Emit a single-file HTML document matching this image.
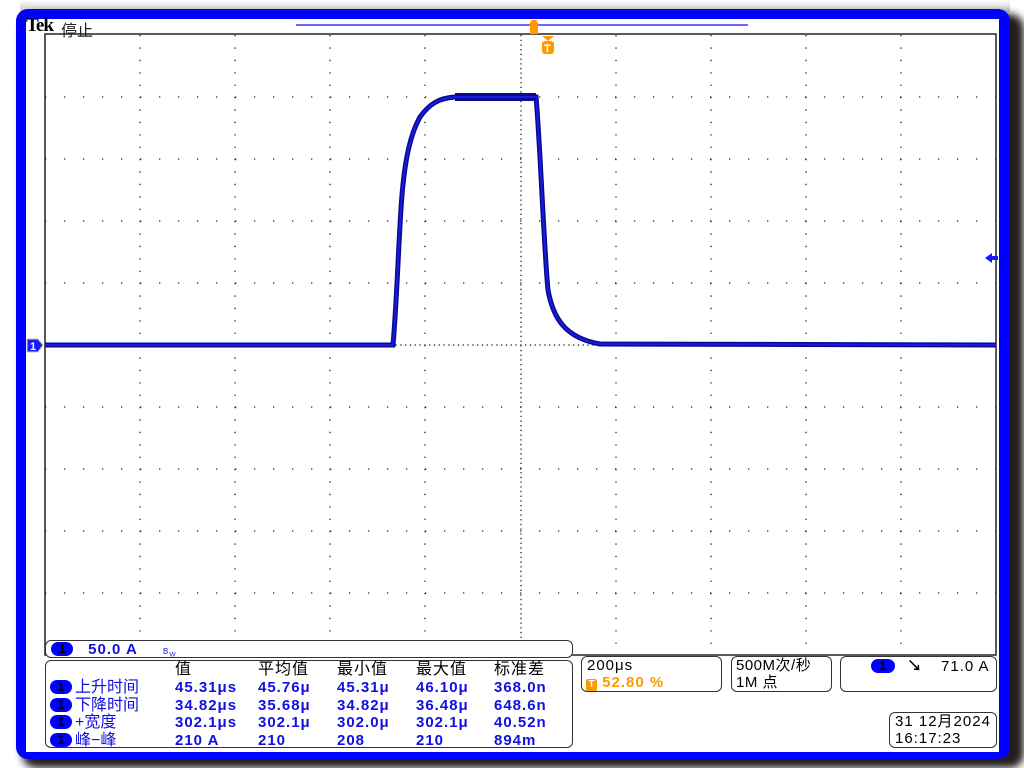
<!DOCTYPE html>
<html><head><meta charset="utf-8">
<style>
*{margin:0;padding:0;box-sizing:border-box}
body{width:1024px;height:768px;background:#fff;position:relative;overflow:hidden;font-family:"Liberation Sans","Noto Sans CJK SC",sans-serif}
.shadow{position:absolute;left:22px;top:14px;width:1002px;height:754px;background:#231d1f;border-radius:14px;filter:blur(4px)}
.topshade{position:absolute;left:20px;top:0;width:990px;height:12px;background:linear-gradient(#fff,#c8c8c8)}
.frame{position:absolute;left:16px;top:9px;width:994px;height:750px;background:#0000ff;border-radius:12px}
.inner{position:absolute;left:26px;top:19px;width:973px;height:733px;background:#fff}
.t{position:absolute;white-space:nowrap}
.box{position:absolute;border:1px solid #333;border-radius:6px;background:#fff}
.pill{display:inline-block;background:#0000ff;color:#000;border-radius:8px;width:22px;height:14px;text-align:center;font-size:13px;line-height:14px;font-weight:bold;letter-spacing:0;vertical-align:1px}
.blue{color:#1010e0;font-weight:bold}
.m{position:absolute;font-size:15px;line-height:17px;white-space:nowrap;letter-spacing:1px}
</style></head><body>
<div class="topshade"></div>
<div class="shadow"></div>
<div class="frame"></div>
<div class="inner"></div>
<div class="t" style="left:26px;top:15px;font-family:'Liberation Serif',serif;font-weight:bold;font-size:19px;letter-spacing:-1px">Tek</div>
<div class="t" style="left:61px;top:17px;font-size:16px;color:#222">停止</div>
<svg style="position:absolute;left:0;top:0" width="1024" height="768">
<line x1="296" y1="25" x2="748" y2="25" stroke="#6a6aff" stroke-width="2"/>
<rect x="45" y="34" width="951" height="621" fill="none" stroke="#222" stroke-width="1.5"/>
<g stroke="#222" stroke-width="1.3">
<line x1="140" y1="35" x2="140" y2="655" stroke-dasharray="1.3 11.1"/>
<line x1="235" y1="35" x2="235" y2="655" stroke-dasharray="1.3 11.1"/>
<line x1="330" y1="35" x2="330" y2="655" stroke-dasharray="1.3 11.1"/>
<line x1="425" y1="35" x2="425" y2="655" stroke-dasharray="1.3 11.1"/>
<line x1="616" y1="35" x2="616" y2="655" stroke-dasharray="1.3 11.1"/>
<line x1="711" y1="35" x2="711" y2="655" stroke-dasharray="1.3 11.1"/>
<line x1="806" y1="35" x2="806" y2="655" stroke-dasharray="1.3 11.1"/>
<line x1="901" y1="35" x2="901" y2="655" stroke-dasharray="1.3 11.1"/>
<line x1="521" y1="35" x2="521" y2="655" stroke-dasharray="1.3 3.4"/>
<line x1="45" y1="97" x2="996" y2="97" stroke-dasharray="1.3 17.7"/>
<line x1="45" y1="159" x2="996" y2="159" stroke-dasharray="1.3 17.7"/>
<line x1="45" y1="221" x2="996" y2="221" stroke-dasharray="1.3 17.7"/>
<line x1="45" y1="283" x2="996" y2="283" stroke-dasharray="1.3 17.7"/>
<line x1="45" y1="407" x2="996" y2="407" stroke-dasharray="1.3 17.7"/>
<line x1="45" y1="469" x2="996" y2="469" stroke-dasharray="1.3 17.7"/>
<line x1="45" y1="531" x2="996" y2="531" stroke-dasharray="1.3 17.7"/>
<line x1="45" y1="593" x2="996" y2="593" stroke-dasharray="1.3 17.7"/>
<line x1="45" y1="345" x2="996" y2="345" stroke-dasharray="1.3 3.5"/>
</g>
<path d="M45 345 L393 345 C397 300 399 230 402 195 C405 160 410 135 420 117 C430 103 440 98 455 97 L536 97 C540 140 544 250 548 290 C553 318 565 338 600 344 L996 345" fill="none" stroke="#0a0a90" stroke-width="5"/>
<path d="M45 345 L393 345 C397 300 399 230 402 195 C405 160 410 135 420 117 C430 103 440 98 455 97 L536 97 C540 140 544 250 548 290 C553 318 565 338 600 344 L996 345" fill="none" stroke="#1a1ae0" stroke-width="2"/>
<rect x="455" y="93" width="81" height="8" fill="#0a0a90"/>
<rect x="455" y="96" width="81" height="2" fill="#1a1ae0"/>
<polygon points="985,258 992,253 992,256 998,256 998,260 992,260 992,263" fill="#1a1aff"/>
<polygon points="27,339 38,339 43,345 38,352 27,352" fill="#1a1aff" stroke="#cc9" stroke-width="1"/>
<text x="30" y="350" font-size="11" font-weight="bold" fill="#fff" font-family="Liberation Sans">1</text>
<rect x="530" y="22" width="8" height="12" fill="#ff9900"/>
<polygon points="530,20 538,20 534,24" fill="#ff9900"/>
<polygon points="542,36 554,36 548,41" fill="#ff9900"/>
<rect x="542" y="41" width="12" height="13" rx="3" fill="#ff9900"/>
<text x="544" y="52" font-size="11" font-weight="bold" fill="#fff" font-family="Liberation Sans">T</text>
</svg>
<div class="box" style="left:45px;top:640px;width:528px;height:18px"></div>
<div class="m" style="left:51px;top:641px"><span class="pill">1</span> <span class="blue" style="margin-left:10px">50.0 A</span> <span style="color:#1010e0;font-size:8px;margin-left:20px">B<sub>W</sub></span></div>
<div class="box" style="left:45px;top:660px;width:528px;height:88px"></div>
<div class="m" style="left:175px;top:661px;font-size:16px">值</div>
<div class="m" style="left:258px;top:661px;font-size:16px">平均值</div>
<div class="m" style="left:337px;top:661px;font-size:16px">最小值</div>
<div class="m" style="left:416px;top:661px;font-size:16px">最大值</div>
<div class="m" style="left:494px;top:661px;font-size:16px">标准差</div>
<div class="m" style="left:50px;top:679px;line-height:17.5px;font-size:16px;letter-spacing:0">
<div><span class="pill">1</span><span style="color:#1010e0;margin-left:3px">上升时间</span></div>
<div><span class="pill">1</span><span style="color:#1010e0;margin-left:3px">下降时间</span></div>
<div><span class="pill">1</span><span style="color:#1010e0;margin-left:3px">+宽度</span></div>
<div><span class="pill">1</span><span style="color:#1010e0;margin-left:3px">峰−峰</span></div>
</div>
<div class="m blue" style="left:175px;top:679px;line-height:17.5px">45.31μs<br>34.82μs<br>302.1μs<br>210 A</div>
<div class="m blue" style="left:258px;top:679px;line-height:17.5px">45.76μ<br>35.68μ<br>302.1μ<br>210</div>
<div class="m blue" style="left:337px;top:679px;line-height:17.5px">45.31μ<br>34.82μ<br>302.0μ<br>208</div>
<div class="m blue" style="left:416px;top:679px;line-height:17.5px">46.10μ<br>36.48μ<br>302.1μ<br>210</div>
<div class="m blue" style="left:494px;top:679px;line-height:17.5px">368.0n<br>648.6n<br>40.52n<br>894m</div>
<div class="box" style="left:581px;top:656px;width:141px;height:36px"></div>
<div class="m" style="left:587px;top:657px">200μs</div>
<div class="m" style="left:586px;top:674px;color:#ff9900;font-weight:bold"><span style="display:inline-block;width:11px;height:12px;background:#ff9900;color:#fff;font-size:10px;line-height:12px;text-align:center;border-radius:2px;letter-spacing:0">T</span> 52.80 %</div>
<div class="box" style="left:731px;top:656px;width:101px;height:36px"></div>
<div class="m" style="left:736px;top:657px;letter-spacing:0.5px">500M次/秒<br>1M 点</div>
<div class="box" style="left:840px;top:656px;width:157px;height:36px"></div>
<div class="m" style="left:871px;top:658px"><span class="pill" style="width:24px">1</span><span style="margin-left:12px;font-weight:bold">↘</span><span style="margin-left:18px">71.0 A</span></div>
<div class="box" style="left:889px;top:712px;width:108px;height:36px"></div>
<div class="m" style="left:895px;top:713px">31 12月2024<br>16:17:23</div>
</body></html>
